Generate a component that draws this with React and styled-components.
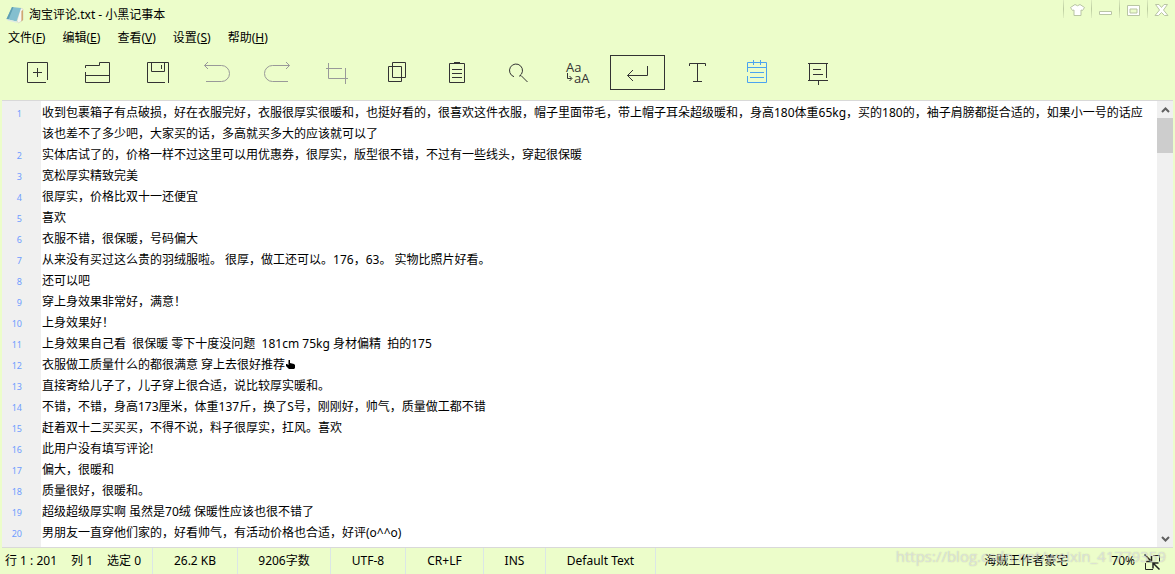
import React from "react";

import styled, { createGlobalStyle, ThemeProvider } from "styled-components";

const theme = {
    CHROME: "#ecfdca",
    LINE: "#d9d9d9",
    STATUS_LINE: "#dbe6e6",
    INK: "#333333",
    MUTED: "#999999",
    ACCENT: "#4ba3f0",
    GUTTER: "#f0f0f0",
};

const GlobalStyle = createGlobalStyle`
  * {
    box-sizing: border-box;
  }

  body {
    margin: 0;
    font-family: "Noto Sans", "Noto Sans CJK SC", sans-serif;
    font-size: 12px;
    color: #000;
  }

  button {
    padding: 0;
    border: 0;
    background: none;
    font: inherit;
    color: inherit;
  }
`;

const menus = [
    { name: "文件", shortcut: "F" },
    { name: "编辑", shortcut: "E" },
    { name: "查看", shortcut: "V" },
    { name: "设置", shortcut: "S" },
    { name: "帮助", shortcut: "H" },
];

const tools = [
    { label: "新建", icon: <path d="M22 23.5H3.5V3.5H23.5V21M9 13.5H18M13.5 9V18" /> },
    { label: "打开", icon: <path d="M1.5 9V6.5H15.5V3.5H25.5V23.5H1.5V13M1.5 16.5H25.5" /> },
    { label: "保存", icon: <path d="M21 23.5H3.5V3.5H24.5V24M7.5 4V12.5H20.5V4M17.5 6V10" /> },
    { label: "撤销", tone: "muted", icon: <path d="M4 3L0.5 6.5L4 10M0.5 6.5H17.5A8 8 0 0 1 17.5 22.5H2" /> },
    { label: "重做", tone: "muted", icon: <path d="M22 3L25.5 6.5L22 10M25.5 6.5H8.5A8 8 0 0 0 8.5 22.5H24" /> },
    { label: "剪切", tone: "muted", icon: <path d="M2 9.5H18M4.5 4V19.5H24M21.5 9V25" /> },
    { label: "复制", icon: <path d="M8.5 3.5H21.5V18.5H8.5ZM4.5 7.5H17.5V22.5H4.5Z" /> },
    { label: "粘贴", icon: <path d="M5.5 4.5H20.5V23.5H5.5ZM10 3.5H16M8 10.5H18M8 14.5H18M8 18.5H18" /> },
    { label: "查找", icon: <path d="M10 17.7A6.5 6.5 0 1 1 15.5 17L17 16.5L23.5 23" /> },
    {
        label: "大小写",
        icon: (
            <>
                <text x="2" y="13">Aa</text>
                <text x="10" y="24">aA</text>
                <path d="M3.5 14V19.5H7.5M5.5 17L8 19.5L5.5 22" />
            </>
        ),
    },
    { label: "自动换行", pressed: true, icon: <path d="M23.5 7V16.5H3.5M9 11L3.5 16.5L9 22" /> },
    { label: "字体", icon: <path d="M5.5 7V4.5H21.5V7M13.5 4.5V22.5M9 22.5H18" /> },
    {
        label: "行号",
        tone: "accent",
        icon: <path d="M3.5 13V3.5H22.5V23.5H3.5V17M3.5 8.5H22.5M9.5 1V6M16.5 1V6M6 13.5H20M6 18.5H20" />,
    },
    { label: "演示", icon: <path d="M4 4.5H24M5.5 4.5V21.5M22.5 4.5V19M4 21.5H24M14.5 21.5V26M9 10.5H17M9 15.5H19" /> },
];

const windowButtons = [
    { label: "皮肤", icon: <path d="M6 1.5L1.5 4.5L3.5 7.5L5 7V12.5H12V7L13.5 7.5L15.5 4.5L11 1.5Q8.5 4 6 1.5Z" /> },
    { label: "最小化", icon: <path d="M2.5 8.5H14.5V11.5H2.5Z" /> },
    { label: "最大化", icon: <path fillRule="evenodd" d="M2.5 2.5H14.5V12.5H2.5ZM5 6V10H12V6Z" /> },
    { label: "关闭", icon: <path d="M2.5 1.5H6L8.5 4.5L11 1.5H14.5L10.5 7L15 12.5H11.5L8.5 9.5L5.5 12.5H2L6.5 7Z" /> },
];

const lines = [
    "收到包裹箱子有点破损，好在衣服完好，衣服很厚实很暖和，也挺好看的，很喜欢这件衣服，帽子里面带毛，带上帽子耳朵超级暖和，身高180体重65kg，买的180的，袖子肩膀都挺合适的，如果小一号的话应该也差不了多少吧，大家买的话，多高就买多大的应该就可以了",
    "实体店试了的，价格一样不过这里可以用优惠券，很厚实，版型很不错，不过有一些线头，穿起很保暖",
    "宽松厚实精致完美",
    "很厚实，价格比双十一还便宜",
    "喜欢",
    "衣服不错，很保暖，号码偏大",
    "从来没有买过这么贵的羽绒服啦。 很厚，做工还可以。176，63。 实物比照片好看。",
    "还可以吧",
    "穿上身效果非常好，满意！",
    "上身效果好！",
    "上身效果自己看  很保暖 零下十度没问题  181cm 75kg 身材偏精  拍的175",
    <>衣服做工质量什么的都很满意 穿上去很好推荐<Hand /></>,
    "直接寄给儿子了，儿子穿上很合适，说比较厚实暖和。",
    "不错，不错，身高173厘米，体重137斤，换了S号，刚刚好，帅气，质量做工都不错",
    "赶着双十二买买买，不得不说，料子很厚实，扛风。喜欢",
    "此用户没有填写评论!",
    "偏大，很暖和",
    "质量很好，很暖和。",
    "超级超级厚实啊 虽然是70绒 保暖性应该也很不错了",
    "男朋友一直穿他们家的，好看帅气，有活动价格也合适，好评(o^^o)",
];

function Hand() {
    return (
        <svg width="11" height="9" viewBox="0 0 11 9" aria-label="赞">
            <path d="M3.5 0H5V3L9 4L10 5V8L9 9H4L1 6V4H2L3.5 5Z" />
        </svg>
    );
}

const Window = styled.div`
    display: flex;
    flex-direction: column;
    position: relative;
    height: 100vh;
    overflow: hidden;
    background: ${props => props.theme.CHROME};
`;

const TitleBar = styled.header`
    display: flex;
    align-items: flex-start;
    justify-content: space-between;
    height: 28px;
`;

const Title = styled.h1`
    display: flex;
    align-items: center;
    gap: 5px;
    margin: 0;
    padding: 5px 6px 3px;
    font-size: 12px;
    font-weight: 400;
    line-height: 20px;
`;

const WindowButtons = styled.div`
    display: flex;
`;

const WindowButton = styled.button`
    display: flex;
    justify-content: center;
    width: 28px;
    height: 18px;
    padding-top: 3px;
    border-left: 1px solid;
    border-image: linear-gradient(#e0efc2, #bccca0, #e4f5c4) 1;

    path {
        fill: #fff;
        stroke: #b9c5a4;
    }
`;

const MenuBar = styled.nav`
    display: flex;
    gap: 1px;
    height: 20px;
`;

const MenuButton = styled.button`
    padding: 0 8px;
    line-height: 20px;
`;

const Toolbar = styled.div`
    display: flex;
    gap: 5px;
    padding: 7px 10px 10px;
`;

const tones = {
    muted: "MUTED",
    accent: "ACCENT",
};

const ToolButton = styled.button`
    display: flex;
    align-items: center;
    justify-content: center;
    width: 55px;
    height: 35px;
    color: ${props => props.theme[tones[props.$tone] || "INK"]};

    &[aria-pressed="true"] {
        box-shadow: inset 0 0 0 1px ${props => props.theme.INK};
    }

    svg {
        overflow: visible;
        fill: none;
        stroke: currentColor;
    }

    text {
        font-family: "Open Sans", sans-serif;
        font-size: 13px;
        fill: currentColor;
        stroke: none;
    }
`;

const Editor = styled.main`
    display: flex;
    flex: 1;
    min-height: 0;
    margin: 0 2px;
    border-top: 1px solid ${props => props.theme.LINE};
    border-bottom: 1px solid ${props => props.theme.LINE};
    background: #fff;
`;

const Document = styled.div`
    flex: 1;
    padding-top: 1px;
    overflow: hidden;
    outline: none;
    background: linear-gradient(to right, ${props => props.theme.GUTTER} 39px, #fff 39px);
`;

const Row = styled.div`
    display: grid;
    grid-template-columns: 40px 1fr;
    line-height: 21px;
`;

const LineNumber = styled.span`
    padding-right: 20px;
    font-size: 9px;
    line-height: 23px;
    height: 21px;
    text-align: right;
    color: #6f9dff;
    user-select: none;
`;

const Line = styled.span`
    padding-right: 4px;
    white-space: pre-wrap;
    word-break: break-all;
`;

const Scrollbar = styled.div`
    display: flex;
    flex-direction: column;
    width: 16px;
    background: ${props => props.theme.GUTTER};
`;

const ScrollButton = styled.button`
    display: flex;
    align-items: center;
    justify-content: center;
    height: 17px;

    path {
        fill: none;
        stroke: #606060;
        stroke-width: 2;
    }
`;

const Track = styled.div`
    flex: 1;
`;

const Thumb = styled.div`
    height: 35px;
    background: #cdcdcd;
`;

const StatusBar = styled.footer`
    display: grid;
    grid-template-columns: 153px 85px 93px 75px 78px 62px 110px 1fr;
    height: 26px;
    line-height: 25px;
`;

const Cell = styled.div`
    display: flex;
    justify-content: center;
    gap: 14px;
    border-right: 1px solid ${props => props.theme.STATUS_LINE};
    white-space: nowrap;
`;

const CaretCell = styled(Cell)`
    justify-content: flex-start;
    padding-left: 5px;
`;

const RightCell = styled(Cell)`
    justify-content: flex-end;
    gap: 9px;
    padding-right: 14px;
    border: 0;
`;

const Author = styled.span`
    margin-right: 34px;
`;

const FullscreenButton = styled.button`
    align-self: flex-end;
    height: 17px;
    margin-bottom: 3px;
    line-height: 0;
`;

const Watermark = styled.div`
    position: absolute;
    right: 9px;
    bottom: 7px;
    font-family: "Open Sans", sans-serif;
    font-size: 15px;
    line-height: 22px;
    color: rgba(255, 255, 255, 0.5);
    text-shadow: 0 0 1px rgba(120, 120, 120, 0.5);
    pointer-events: none;
`;

function BookIcon() {
    return (
        <svg width="18" height="18" viewBox="0 0 18 18" aria-hidden="true">
            <path d="M14.5 2L17 3V14L12.5 17L11 15Z" fill="#f7f7f2" stroke="#c8c8b8" strokeWidth="0.5" />
            <path d="M16.8 4V14L15.5 15.5V5Z" fill="#c99655" />
            <path d="M6 1L15 2L10.5 15.5L0.5 13Z" fill="#84bfcf" />
            <path d="M6 1L7.5 1.2L2.5 13.5L0.5 13Z" fill="#5f9fb2" />
            <path d="M0.5 13L10.5 15.5L12 17L2 14.8Z" fill="#dfe9e6" />
        </svg>
    );
}

export default function App() {
    return (
        <ThemeProvider theme={theme}>
            <GlobalStyle />
            <Window>
                <TitleBar>
                    <Title><BookIcon />淘宝评论.txt - 小黑记事本</Title>
                    <WindowButtons>
                        {windowButtons.map(button => (
                            <WindowButton key={button.label} aria-label={button.label}>
                                <svg width="17" height="14" viewBox="0 0 17 14">{button.icon}</svg>
                            </WindowButton>
                        ))}
                    </WindowButtons>
                </TitleBar>
                <MenuBar>
                    {menus.map(menu => (
                        <MenuButton key={menu.shortcut}>{menu.name}(<u>{menu.shortcut}</u>)</MenuButton>
                    ))}
                </MenuBar>
                <Toolbar>
                    {tools.map(tool => (
                        <ToolButton
                            key={tool.label}
                            aria-label={tool.label}
                            aria-pressed={tool.pressed}
                            $tone={tool.tone}
                        >
                            <svg width="27" height="27" viewBox="0 0 27 27">{tool.icon}</svg>
                        </ToolButton>
                    ))}
                </Toolbar>
                <Editor>
                    <Document
                        role="textbox"
                        aria-multiline="true"
                        aria-label="文档"
                        contentEditable
                        suppressContentEditableWarning
                        spellCheck={false}
                    >
                        {lines.map((line, i) => (
                            <Row key={i}>
                                <LineNumber contentEditable={false}>{i + 1}</LineNumber>
                                <Line>{line}</Line>
                            </Row>
                        ))}
                    </Document>
                    <Scrollbar>
                        <ScrollButton aria-label="向上滚动">
                            <svg width="9" height="6" viewBox="0 0 9 6"><path d="M1 5L4.5 1.5L8 5" /></svg>
                        </ScrollButton>
                        <Track><Thumb /></Track>
                        <ScrollButton aria-label="向下滚动">
                            <svg width="9" height="6" viewBox="0 0 9 6"><path d="M1 1L4.5 4.5L8 1" /></svg>
                        </ScrollButton>
                    </Scrollbar>
                </Editor>
                <StatusBar>
                    <CaretCell>
                        <span>行 1 : 201</span>
                        <span>列 1</span>
                        <span>选定 0</span>
                    </CaretCell>
                    <Cell>26.2 KB</Cell>
                    <Cell>9206字数</Cell>
                    <Cell>UTF-8</Cell>
                    <Cell>CR+LF</Cell>
                    <Cell>INS</Cell>
                    <Cell>Default Text</Cell>
                    <RightCell>
                        <Author>海贼王作者豪宅</Author>
                        <span>70%</span>
                        <FullscreenButton aria-label="退出全屏">
                            <svg width="17" height="17" viewBox="0 0 17 17" fill="none" stroke="#222">
                                <path d="M9 1.5H15.5V8M1.5 9V15.5H9" />
                                <path d="M0.5 0.5L6.5 6.5M7.5 2V7.5H2M15.5 15.5L9.5 9.5M9 14.5V9H14.5" strokeWidth="1.5" />
                            </svg>
                        </FullscreenButton>
                    </RightCell>
                </StatusBar>
                <Watermark>https://blog.csdn.net/weixin_41779359</Watermark>
            </Window>
        </ThemeProvider>
    );
}
